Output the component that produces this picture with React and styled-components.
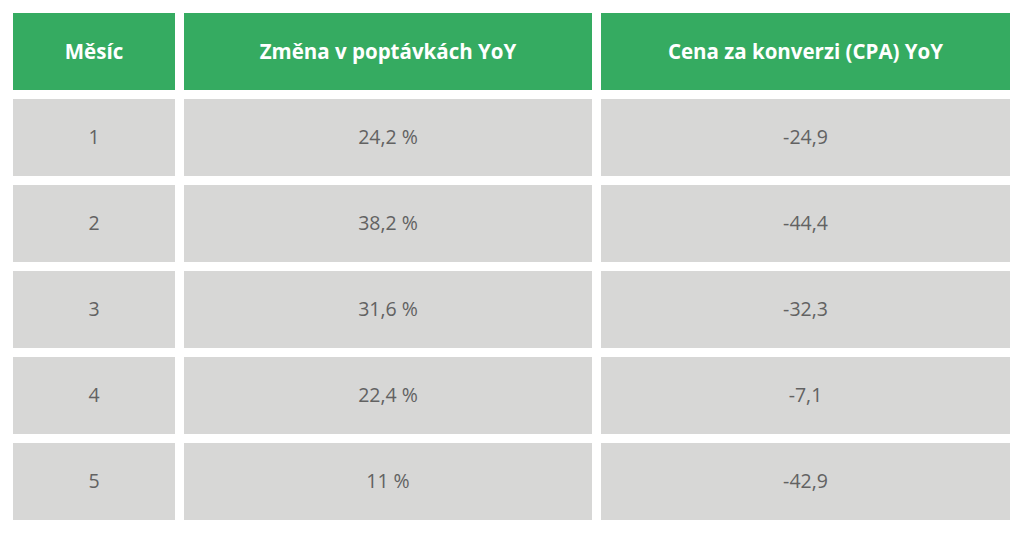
import React from 'react';
import styled, { createGlobalStyle } from 'styled-components';

const GlobalStyle = createGlobalStyle`
  html, body {
    margin: 0;
    padding: 0;
    background: #ffffff;
  }
`;

const Page = styled.div`
  padding: 13px 14px 14px 13px;
  font-family: 'Open Sans', 'Liberation Sans', sans-serif;
`;

const Table = styled.div`
  display: grid;
  grid-template-columns: 162px 408px 409px;
  grid-auto-rows: 77px;
  gap: 9px;
`;

const Cell = styled.div`
  display: flex;
  align-items: center;
  justify-content: center;
  background: ${props => (props.head ? '#35ab61' : '#d7d7d6')};
  color: ${props => (props.head ? '#ffffff' : '#626262')};
  font-size: ${props => (props.head ? '20.5px' : '19.5px')};
  font-weight: ${props => (props.head ? 700 : 400)};
  padding-bottom: 2px;
`;

const headers = ['Měsíc', 'Změna v poptávkách YoY', 'Cena za konverzi (CPA) YoY'];

const rows = [
  ['1', '24,2 %', '-24,9'],
  ['2', '38,2 %', '-44,4'],
  ['3', '31,6 %', '-32,3'],
  ['4', '22,4 %', '-7,1'],
  ['5', '11 %', '-42,9'],
];

export default function App() {
  return (
    <Page>
      <GlobalStyle />
      <Table>
        {headers.map(h => (
          <Cell head key={h}>{h}</Cell>
        ))}
        {rows.map((row, i) =>
          row.map((value, j) => <Cell key={`${i}-${j}`}>{value}</Cell>)
        )}
      </Table>
    </Page>
  );
}
